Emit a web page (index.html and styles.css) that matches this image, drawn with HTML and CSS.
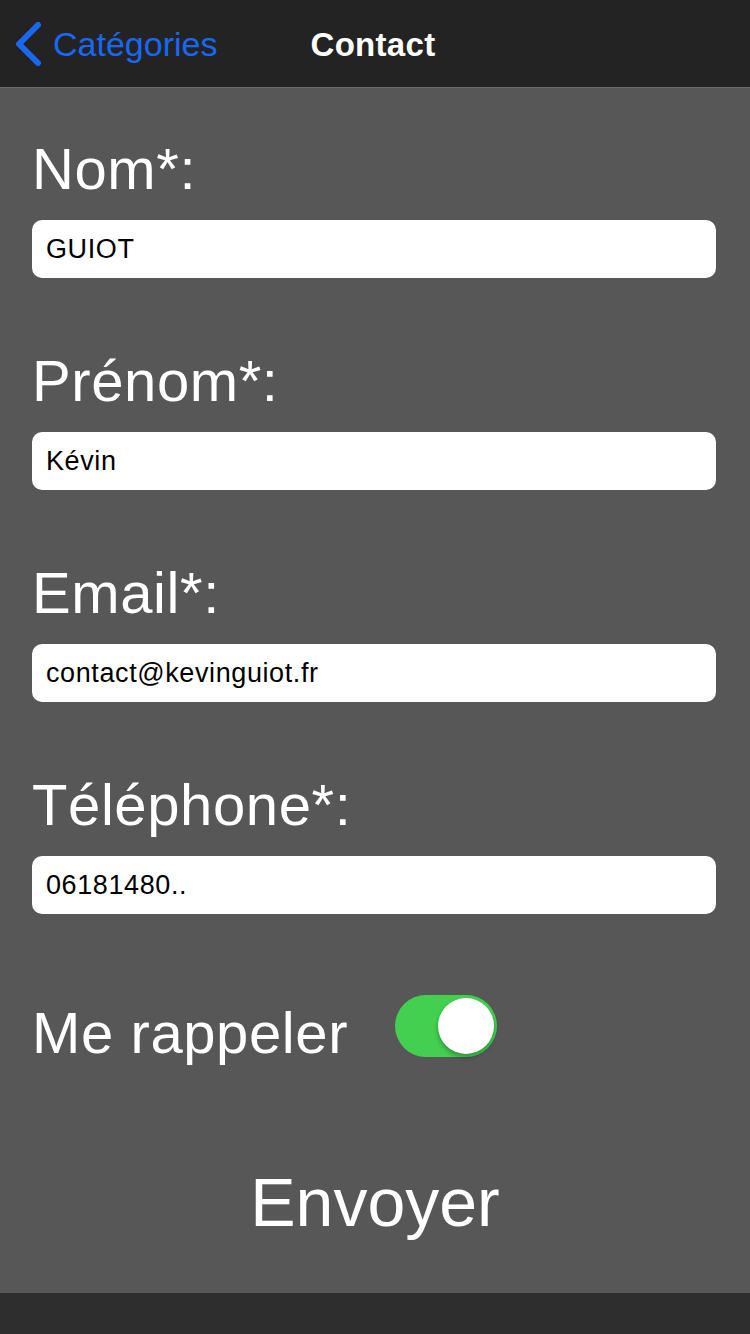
FILE: index.html
```html
<!DOCTYPE html>
<html lang="fr">
<head>
<meta charset="utf-8">
<title>Contact</title>
<link rel="stylesheet" href="styles.css">
</head>
<body>
<div class="screen">
  <header class="nav">
    <a class="back">
      <svg class="chev" width="30" height="44" viewBox="0 0 30 44"><path d="M24 3 L5 22 L24 41" fill="none" stroke="#1a68f2" stroke-width="6" stroke-linecap="round" stroke-linejoin="round"/></svg>
      <span>Catégories</span>
    </a>
    <h1 class="title">Contact</h1>
  </header>
  <main class="form">
    <div class="field">
      <label class="label">Nom*:</label>
      <div class="input">GUIOT</div>
    </div>
    <div class="field">
      <label class="label">Prénom*:</label>
      <div class="input">Kévin</div>
    </div>
    <div class="field">
      <label class="label">Email*:</label>
      <div class="input">contact@kevinguiot.fr</div>
    </div>
    <div class="field">
      <label class="label">Téléphone*:</label>
      <div class="input">06181480..</div>
    </div>
    <div class="switch-row">
      <span class="label switch-label">Me rappeler</span>
      <div class="toggle"><div class="knob"></div></div>
    </div>
    <div class="send">Envoyer</div>
  </main>
  <footer class="bottom"></footer>
</div>
</body>
</html>
```
FILE: styles.css
```css
* { box-sizing: border-box; }
html, body { margin: 0; padding: 0; }
body {
  font-family: "Liberation Sans", Arial, sans-serif;
  background: #575757;
}
.screen {
  width: 750px;
  height: 1334px;
  display: flex;
  flex-direction: column;
}
.nav {
  height: 88px;
  flex: none;
  background: #232323;
  border-bottom: 1px solid #6c6c6c;
  position: relative;
  display: flex;
  align-items: center;
  padding-left: 14px;
}
.back {
  display: flex;
  align-items: center;
  color: #1a68f2;
  font-size: 34px;
  gap: 9px;
  padding-top: 2px;
}
.chev { display: block; margin-top: -2px; }
.title {
  position: absolute;
  left: 0;
  right: 0;
  top: 0;
  bottom: 0;
  margin: 0;
  display: flex;
  align-items: center;
  justify-content: center;
  padding-right: 4px;
  padding-top: 2px;
  color: #fff;
  font-size: 33px;
  font-weight: bold;
  letter-spacing: 0.3px;
  pointer-events: none;
}
.form {
  flex: 1;
  background: #575757;
  padding: 46px 34px 0 32px;
  display: flex;
  flex-direction: column;
}
.field { display: flex; flex-direction: column; margin-bottom: 68px; }
.field:nth-child(4) { margin-bottom: 81px; }
.label {
  color: #fff;
  font-size: 58px;
  line-height: 70px;
  height: 70px;
  letter-spacing: 0.6px;
}
.input {
  margin-top: 16px;
  height: 58px;
  background: #fff;
  border-radius: 10px;
  padding-left: 14px;
  font-size: 27px;
  line-height: 58px;
  letter-spacing: 0.6px;
  color: #000;
}
.switch-row {
  display: flex;
  align-items: flex-start;
  height: 62px;
}
.switch-label { width: 363px; margin-top: 3px; flex: none; }
.toggle {
  width: 102px;
  height: 62px;
  border-radius: 31px;
  background: #43d051;
  position: relative;
}
.knob {
  position: absolute;
  right: 3px;
  top: 3px;
  width: 56px;
  height: 56px;
  border-radius: 50%;
  background: #fff;
  box-shadow: 0 3px 5px rgba(0,0,0,0.3);
}
.send {
  margin-top: 105px;
  margin-right: -2px;
  text-align: center;
  color: #fff;
  font-size: 68px;
  line-height: 80px;
}
.bottom {
  height: 41px;
  flex: none;
  background: #2e2e2e;
}
```
